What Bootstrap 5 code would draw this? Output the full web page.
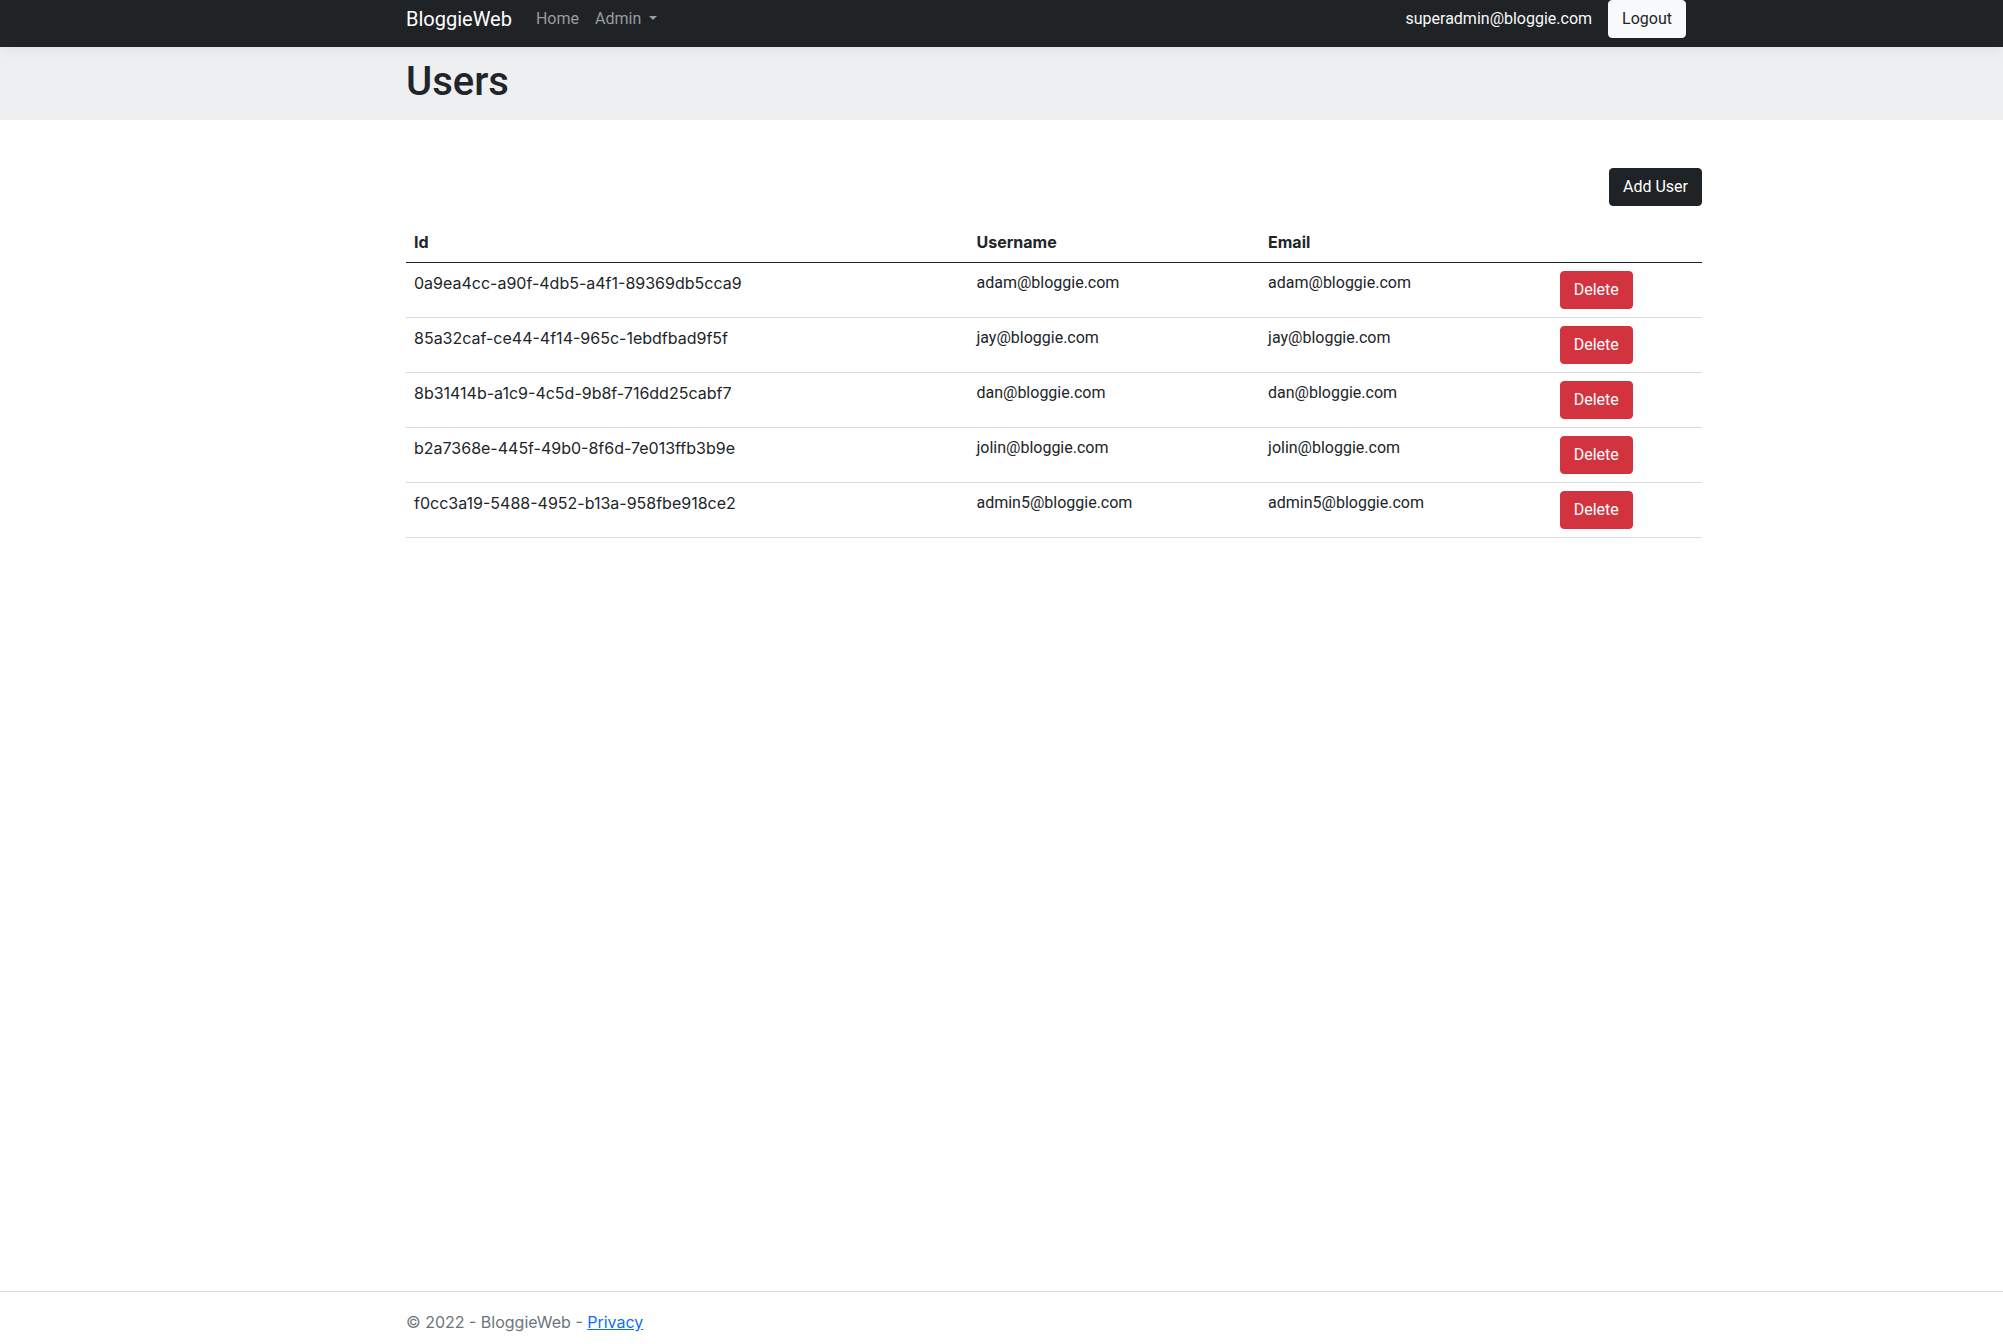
<!DOCTYPE html>
<html lang="en">
<head>
<meta charset="utf-8">
<meta name="viewport" content="width=device-width, initial-scale=1">
<title>Users - BloggieWeb</title>
<link rel="stylesheet" href="https://cdn.jsdelivr.net/npm/bootstrap@5.3.0/dist/css/bootstrap.min.css">
<style>
body { font-family: Roboto, Inter, "Liberation Sans", sans-serif; color: #212529; }
.container { max-width: 1320px; }
.btn { --bs-btn-padding-x: 13px; border-radius: 4px; }
.btn-dark { --bs-btn-bg: #1f2326; --bs-btn-border-color: #1f2326; }
.btn-light { --bs-btn-color: #212529; --bs-btn-bg: #f8f9fb; --bs-btn-border-color: #f8f9fb; }
.btn-danger { --bs-btn-bg: #d3323f; --bs-btn-border-color: #d3323f; }
.site-nav { position: relative; z-index: 1; background: #1f2326; padding: 0 0 9px; box-shadow: 0 4px 12px rgba(0, 0, 0, .05); --bs-navbar-color: #9a9b9c; }
.page-band { background: #edeff1; padding: 11px 0 14px; }
.users-table { table-layout: fixed; border-color: #d9dcdf; color: #212529; }
.users-table thead th { border-bottom-color: #212529; }
.users-table th, .id-cell, .site-footer { font-family: Inter, "Liberation Sans", sans-serif; }
.col-id { width: 43.4%; }
.col-name, .col-mail { width: 22.5%; }
.site-footer { padding: 18px 0 10px; border-top: 1px solid #d9dcdf; color: #6c757d; }
.site-footer a { color: #0d6efd; }
@media (min-width: 1500px) {
  .site-nav, .page-band, .page-main, .site-footer { padding-left: 105px; }
}
</style>
</head>
<body class="d-flex flex-column min-vh-100">
<header>
<nav class="navbar navbar-expand-sm navbar-dark site-nav">
<div class="container">
<a class="navbar-brand py-0 me-4" href="#">BloggieWeb</a>
<ul class="navbar-nav flex-grow-1">
<li class="nav-item"><a class="nav-link py-0 ps-0" href="#">Home</a></li>
<li class="nav-item dropdown"><a class="nav-link dropdown-toggle py-0" href="#" role="button" data-bs-toggle="dropdown" aria-expanded="false">Admin </a></li>
</ul>
<div class="me-3 text-light">superadmin@bloggie.com</div>
<a class="btn btn-light me-3" href="#">Logout</a>
</div>
</nav>
</header>
<div class="page-band"><div class="container"><h1 class="mb-0">Users</h1></div></div>
<main class="page-main flex-grow-1">
<div class="container py-5">
<div class="d-flex justify-content-end mb-3"><button class="btn btn-dark" type="button">Add User</button></div>
<table class="table users-table">
<colgroup><col class="col-id"><col class="col-name"><col class="col-mail"><col></colgroup>
<thead><tr><th scope="col">Id</th><th scope="col">Username</th><th scope="col">Email</th><th></th></tr></thead>
<tbody>
<tr><td class="id-cell">0a9ea4cc-a90f-4db5-a4f1-89369db5cca9</td><td>adam@bloggie.com</td><td>adam@bloggie.com</td><td><button class="btn btn-danger" type="button">Delete</button></td></tr>
<tr><td class="id-cell">85a32caf-ce44-4f14-965c-1ebdfbad9f5f</td><td>jay@bloggie.com</td><td>jay@bloggie.com</td><td><button class="btn btn-danger" type="button">Delete</button></td></tr>
<tr><td class="id-cell">8b31414b-a1c9-4c5d-9b8f-716dd25cabf7</td><td>dan@bloggie.com</td><td>dan@bloggie.com</td><td><button class="btn btn-danger" type="button">Delete</button></td></tr>
<tr><td class="id-cell">b2a7368e-445f-49b0-8f6d-7e013ffb3b9e</td><td>jolin@bloggie.com</td><td>jolin@bloggie.com</td><td><button class="btn btn-danger" type="button">Delete</button></td></tr>
<tr><td class="id-cell">f0cc3a19-5488-4952-b13a-958fbe918ce2</td><td>admin5@bloggie.com</td><td>admin5@bloggie.com</td><td><button class="btn btn-danger" type="button">Delete</button></td></tr>
</tbody>
</table>
</div>
</main>
<footer class="site-footer"><div class="container">&copy; 2022 - BloggieWeb - <a href="#">Privacy</a></div></footer>
<script src="https://cdn.jsdelivr.net/npm/bootstrap@5.3.0/dist/js/bootstrap.bundle.min.js"></script>
</body>
</html>
